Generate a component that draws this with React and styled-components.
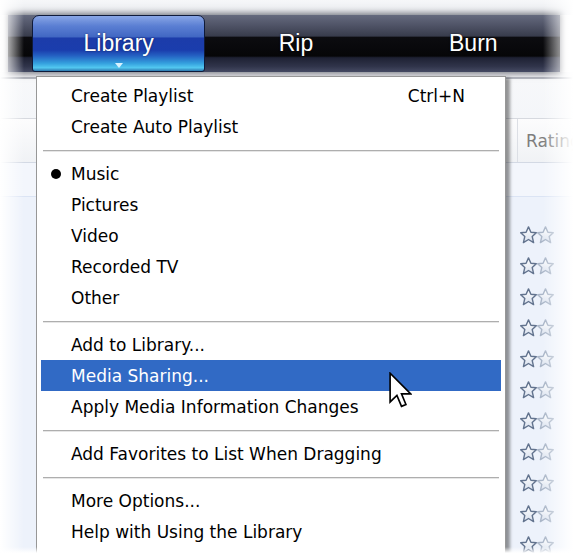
import React from "react";
import styled, { createGlobalStyle } from "styled-components";

const GlobalStyle = createGlobalStyle`
  html, body {
    margin: 0;
    padding: 0;
    background: #ffffff;
  }
  body {
    font-family: "DejaVu Sans", Verdana, sans-serif;
  }
`;

const tabs = [
  { label: "Library", active: true },
  { label: "Rip" },
  { label: "Burn" },
];

const menu = [
  { label: "Create Playlist", shortcut: "Ctrl+N" },
  { label: "Create Auto Playlist" },
  { sep: true },
  { label: "Music", checked: true },
  { label: "Pictures" },
  { label: "Video" },
  { label: "Recorded TV" },
  { label: "Other" },
  { sep: true },
  { label: "Add to Library..." },
  { label: "Media Sharing...", hover: true },
  { label: "Apply Media Information Changes" },
  { sep: true },
  { label: "Add Favorites to List When Dragging" },
  { sep: true },
  { label: "More Options..." },
  { label: "Help with Using the Library" },
];

function Star({ faded }) {
  return (
    <svg width="17" height="18" viewBox="0 0 17 18">
      <defs>
        <linearGradient id="starFill" x1="0" y1="0" x2="0" y2="1">
          <stop offset="0" stopColor="#ffffff" />
          <stop offset="1" stopColor="#d9e1ee" />
        </linearGradient>
      </defs>
      <path
        d="M8.5 0.9 L10.9 6.2 L16.3 6.7 L12.2 10.5 L13.6 16.6 L8.5 13.5 L3.4 16.6 L4.8 10.5 L0.7 6.7 L6.1 6.2 Z"
        fill="url(#starFill)"
        stroke={faded ? "#aab6c8" : "#62738e"}
        strokeWidth="1.4"
        strokeLinejoin="round"
      />
    </svg>
  );
}

function Cursor() {
  return (
    <CursorBox>
      <svg width="23" height="38" viewBox="0 0 12.5 20.5">
        <path
          d="M0.6 0.6 L0.6 16.2 L4.3 12.6 L6.8 18.6 L9.2 17.6 L6.8 11.8 L11.8 11.8 Z"
          fill="#ffffff"
          stroke="#000000"
          strokeWidth="0.9"
          strokeLinejoin="miter"
        />
      </svg>
    </CursorBox>
  );
}

export default function App() {
  const rows = Array.from({ length: 11 });
  return (
    <>
      <GlobalStyle />
      <Page>
        <TopBand />
        <Toolbar>
          {tabs.map((t) => (
            <Tab key={t.label} $active={t.active}>
              <TabLabel>{t.label}</TabLabel>
              {t.active && <Caret />}
            </Tab>
          ))}
        </Toolbar>

        <ListView>
          <Strip />
          <HeaderRow>
            <HeaderCell />
            <RatingHead>Rating</RatingHead>
          </HeaderRow>
          <GroupRow />
          <Rows>
            {rows.map((_, i) => (
              <Row key={i}>
                <Cell />
                <RatingCell>
                  <Star />
                  <Star faded />
                </RatingCell>
              </Row>
            ))}
          </Rows>
        </ListView>

        <Menu>
          {menu.map((m, i) =>
            m.sep ? (
              <Separator key={i} />
            ) : (
              <Item key={i} $hover={m.hover}>
                <Mark>{m.checked && <Bullet />}</Mark>
                <ItemLabel>{m.label}</ItemLabel>
                {m.shortcut && <Shortcut>{m.shortcut}</Shortcut>}
              </Item>
            )
          )}
        </Menu>

        <Cursor />
        <Fade />
      </Page>
    </>
  );
}

const Page = styled.div`
  position: relative;
  width: 573px;
  height: 557px;
  overflow: hidden;
  background: #ffffff;
  display: flex;
  flex-direction: column;
`;

const TopBand = styled.div`
  height: 15px;
  flex: none;
  background: linear-gradient(#f6f7f9, #e9ebef);
`;

const Toolbar = styled.div`
  flex: none;
  height: 57px;
  margin: 0 13px 0 8px;
  padding-left: 24px;
  display: flex;
  gap: 4px;
  box-shadow: 0 0 6px 2px rgba(30, 32, 45, 0.55);
  background: linear-gradient(
    to bottom,
    #656a7e 0%,
    #4d5164 20%,
    #383c4c 37%,
    #0c0c10 39%,
    #060608 72%,
    #1e2133 75%,
    #30344a 90%,
    #454a63 100%
  );
  position: relative;
  z-index: 1;
`;

const Tab = styled.div`
  width: 178px;
  height: 57px;
  box-sizing: border-box;
  padding-top: 14px;
  display: flex;
  flex-direction: column;
  align-items: center;
  color: #ffffff;
  border-radius: 7px 7px 3px 3px;
  border: 1px solid ${(p) => (p.$active ? "#0f1a3a" : "transparent")};
  background: ${(p) =>
    p.$active
      ? `linear-gradient(
          to bottom,
          #89a6e6 0%,
          #5b7fd3 18%,
          #4167c3 38%,
          #1c3caa 40%,
          #1a3dad 62%,
          #2460c2 72%,
          #34a0de 86%,
          #52c8f0 94%,
          #2d78b0 100%
        )`
      : "transparent"};
`;

const TabLabel = styled.span`
  font-family: "Liberation Sans", Arial, sans-serif;
  font-size: 23px;
  line-height: 24px;
  transform: scaleY(1.08);
  text-shadow: 0 0 2px rgba(0, 0, 0, 0.5);
`;

const Caret = styled.span`
  margin-top: 9px;
  width: 0;
  height: 0;
  border-left: 4px solid transparent;
  border-right: 4px solid transparent;
  border-top: 5px solid #d8f2ff;
`;

const ListView = styled.div`
  flex: 1;
  display: flex;
  flex-direction: column;
  background: #edf2fb;
`;

const Strip = styled.div`
  height: 46px;
  flex: none;
  background: linear-gradient(
    to bottom,
    #f3f4f6 0px,
    #f3f4f6 5px,
    #b7bac2 5px,
    #b7bac2 7px,
    #f7f8fa 7px,
    #f4f6f9 100%
  );
`;

const HeaderRow = styled.div`
  height: 45px;
  flex: none;
  box-sizing: border-box;
  display: grid;
  grid-template-columns: 1fr 56px;
  border-top: 1px solid #d6d9df;
  border-bottom: 1px solid #d3d9e4;
  background: linear-gradient(#fcfcfd, #f0f2f5);
`;

const HeaderCell = styled.div``;

const RatingHead = styled.div`
  border-left: 1px solid #dcdfe5;
  padding-left: 8px;
  display: flex;
  align-items: center;
  overflow: hidden;
  font-size: 17px;
  color: #7d7d7d;
  white-space: nowrap;
`;

const GroupRow = styled.div`
  height: 34px;
  flex: none;
  box-sizing: border-box;
  border-bottom: 1px solid #dbe4f4;
  background: #f3f6fc;
`;

const Rows = styled.div`
  padding-top: 22px;
  display: flex;
  flex-direction: column;
`;

const Row = styled.div`
  height: 31px;
  display: grid;
  grid-template-columns: 1fr 53px;
`;

const Cell = styled.div``;

const RatingCell = styled.div`
  display: flex;
  align-items: center;
  gap: 0;
`;

const Menu = styled.div`
  position: absolute;
  left: 36px;
  top: 76px;
  width: 470px;
  height: 478px;
  box-sizing: border-box;
  padding: 3px 4px 0;
  background: #ffffff;
  border: 1px solid #979797;
  border-bottom: none;
  box-shadow: 4px 2px 3px rgba(0, 0, 0, 0.4);
  display: flex;
  flex-direction: column;
  z-index: 2;
`;

const Item = styled.div`
  height: 31px;
  flex: none;
  display: flex;
  align-items: center;
  padding-right: 36px;
  font-size: 17px;
  white-space: nowrap;
  color: ${(p) => (p.$hover ? "#ffffff" : "#000000")};
  background: ${(p) => (p.$hover ? "#316ac5" : "transparent")};
`;

const Mark = styled.span`
  width: 30px;
  flex: none;
  display: flex;
  justify-content: center;
`;

const Bullet = styled.span`
  width: 10px;
  height: 10px;
  border-radius: 50%;
  background: #000000;
`;

const ItemLabel = styled.span`
  flex: 1;
`;

const Shortcut = styled.span``;

const Separator = styled.div`
  height: 16px;
  flex: none;
  margin: 0 2px;
  display: flex;
  align-items: center;

  &::before {
    content: "";
    flex: 1;
    height: 1px;
    background: #aeaeae;
    box-shadow: 0 1px 0 #e6e6e6;
  }
`;

const CursorBox = styled.div`
  position: absolute;
  left: 389px;
  top: 372px;
  z-index: 3;
  line-height: 0;
`;

const Fade = styled.div`
  position: absolute;
  inset: 0;
  pointer-events: none;
  z-index: 4;
  background:
    linear-gradient(to right, #ffffff 0px, rgba(255, 255, 255, 0) 24px),
    linear-gradient(to left, #ffffff 0px, rgba(255, 255, 255, 0) 30px),
    linear-gradient(to top, #ffffff 0px, #ffffff 4px, rgba(255, 255, 255, 0) 10px);
`;
